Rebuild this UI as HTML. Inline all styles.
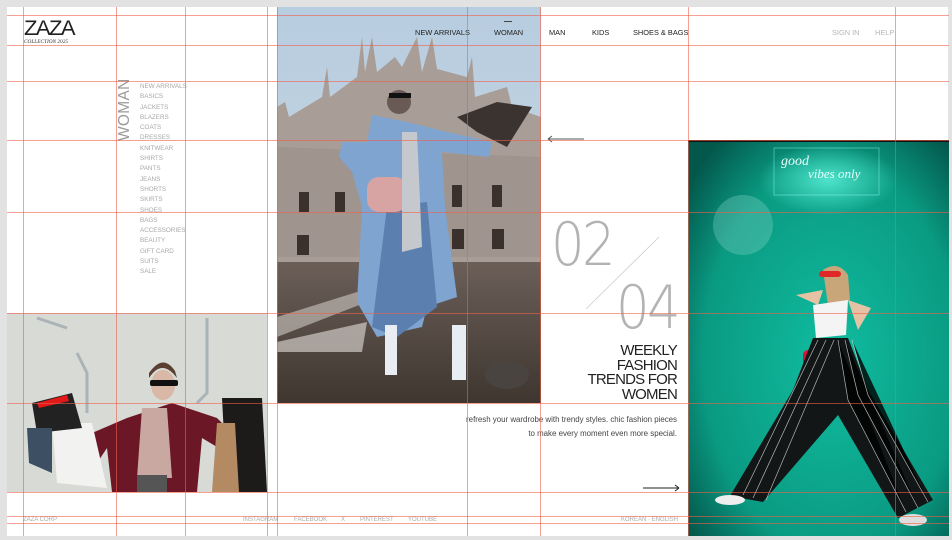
<!DOCTYPE html>
<html><head><meta charset="utf-8"><style>
*{margin:0;padding:0;box-sizing:border-box}
body{width:952px;height:540px;background:#e2e2e2;position:relative;overflow:hidden;font-family:"Liberation Sans",Arial,sans-serif}
.pg{position:absolute;left:7px;top:7px;width:941px;height:529px;background:#fff}
.a{position:absolute;white-space:nowrap}
.nav{font-size:7.4px;color:#222;top:28px}
.menu{left:140px;top:82px;font-size:6.3px;color:#a8a8a8;line-height:10.3px}
.ft{top:517px;font-size:6px;color:#aaa}
.vl{position:absolute;top:7px;width:1px;height:529px;background:rgba(240,95,75,.6)}
.hl{position:absolute;left:7px;height:1px;width:942px;background:rgba(240,95,75,.6)}
.num{font-family:"DejaVu Sans","Liberation Sans",sans-serif;font-weight:200;font-size:60px;color:#b3b3b3;letter-spacing:-3px;transform:scaleX(.88);transform-origin:left}
</style></head><body>
<div class="pg"></div>

<!-- center photo -->
<svg class="a" style="left:277px;top:7px" width="264" height="396" viewBox="0 0 264 396">
<defs><linearGradient id="sky" x1="0" y1="0" x2="0" y2="1"><stop offset="0" stop-color="#b7cde0"/><stop offset="1" stop-color="#cfd8df"/></linearGradient>
<linearGradient id="gr" x1="0" y1="0" x2="0" y2="1"><stop offset="0" stop-color="#6b5f58"/><stop offset="1" stop-color="#3f3630"/></linearGradient></defs>
<rect width="264" height="396" fill="url(#sky)"/>
<path d="M0 100 L8 95 L12 110 L45 90 L50 60 L53 90 L80 70 L85 30 L88 65 L95 30 L100 65 L118 50 L125 60 L140 30 L145 65 L155 30 L160 62 L190 70 L195 50 L198 90 L230 80 L235 100 L264 110 L264 258 L0 258Z" fill="#a89d97"/>
<path d="M0 140 L264 150 L264 250 L0 250Z" fill="#968b85" opacity=".5"/>
<g fill="#3a302c"><rect x="22" y="185" width="10" height="20"/><rect x="58" y="185" width="10" height="20"/><rect x="175" y="178" width="10" height="22"/><rect x="215" y="178" width="10" height="22"/><rect x="20" y="228" width="12" height="20"/><rect x="175" y="222" width="12" height="20"/><rect x="215" y="222" width="12" height="20"/></g>
<rect y="255" width="264" height="141" fill="url(#gr)"/>
<path d="M0 310 L80 285 L90 295 L0 330Z" fill="#bdb6b0" opacity=".7"/>
<path d="M0 335 L90 315 L85 345 L0 345Z" fill="#cfc9c4" opacity=".7"/>
<path d="M95 108 L130 115 L170 125 L215 135 L212 150 L165 145 L168 200 L180 290 L150 300 L145 320 L100 330 L80 295 L85 200 L75 165 L62 150 L65 135 L90 135Z" fill="#7fa4d0"/>
<path d="M110 200 L150 195 L160 300 L120 330 L95 320Z" fill="#5b7fae"/>
<rect x="90" y="170" width="40" height="35" rx="12" fill="#d8a3a3"/>
<path d="M125 125 L140 125 L145 240 L125 245Z" fill="#c5c8cc"/>
<circle cx="122" cy="95" r="12" fill="#6a5a55"/>
<rect x="112" y="86" width="22" height="5" fill="#111"/>
<rect x="108" y="318" width="12" height="50" fill="#e8edf3"/>
<rect x="175" y="318" width="14" height="55" fill="#e8edf3"/>
<path d="M180 110 L220 95 L255 100 L230 140 L200 125Z" fill="#3a3330"/>
<ellipse cx="230" cy="368" rx="22" ry="14" fill="#4a4440"/>
</svg>

<!-- bottom-left photo -->
<svg class="a" style="left:7px;top:313px" width="260" height="179" viewBox="0 0 260 179">
<rect width="260" height="179" fill="#d8dad6"/>
<path d="M30 5 L60 15 M200 5 L200 80 L190 90 M70 40 L80 60 L80 100 M235 110 L240 140" stroke="#8c9aa4" stroke-width="3" fill="none" opacity=".6"/>
<path d="M85 120 L120 105 L165 90 L180 95 L210 105 L225 120 L220 140 L195 125 L190 179 L105 179 L100 135 L90 150Z" fill="#6b1726"/>
<path d="M135 95 L160 95 L165 165 L130 165Z" fill="#c9a8a2"/>
<rect x="130" y="162" width="30" height="17" fill="#555"/>
<ellipse cx="156" cy="72" rx="12" ry="15" fill="#d9b8a8"/>
<path d="M142 65 Q155 45 170 65 L168 58 Q156 40 142 60Z" fill="#5a4030"/>
<rect x="143" y="67" width="28" height="6" rx="2" fill="#111"/>
<path d="M45 110 L85 110 L100 175 L50 170Z" fill="#f2f2f0"/>
<path d="M25 90 L65 80 L75 115 L30 120Z" fill="#222"/>
<path d="M30 90 L60 82 L62 88 L32 95Z" fill="#e31818"/>
<path d="M20 115 L45 115 L45 160 L22 150Z" fill="#3d4f62"/>
<path d="M215 85 L255 85 L260 179 L220 179Z" fill="#1d1a1a"/>
<path d="M210 110 L228 110 L232 179 L205 179Z" fill="#b48a63"/>
</svg>

<!-- right photo -->
<svg class="a" style="left:688px;top:140px" width="261" height="396" viewBox="0 0 261 396">
<defs><radialGradient id="tl" cx=".55" cy=".55" r=".7"><stop offset="0" stop-color="#10bda0"/><stop offset=".7" stop-color="#0a9a82"/><stop offset="1" stop-color="#03574b"/></radialGradient>
<radialGradient id="gl" cx=".5" cy=".5" r=".5"><stop offset="0" stop-color="#5ff5dc" stop-opacity=".8"/><stop offset="1" stop-color="#5ff5dc" stop-opacity="0"/></radialGradient></defs>
<rect width="261" height="396" fill="url(#tl)"/>
<rect x="0" y="0" width="261" height="2" fill="#111"/>
<ellipse cx="140" cy="40" rx="70" ry="35" fill="url(#gl)"/>
<ellipse cx="55" cy="85" rx="30" ry="30" fill="#7fd2c2" opacity=".35"/>
<rect x="86" y="8" width="105" height="47" fill="none" stroke="#9ff" stroke-width=".6" opacity=".7"/>
<text x="93" y="25" font-family="Liberation Serif,serif" font-style="italic" font-size="14" fill="#e8fffb">good</text>
<text x="120" y="38" font-family="Liberation Serif,serif" font-style="italic" font-size="13" fill="#e8fffb">vibes only</text>
<path d="M135 130 Q150 120 160 135 L162 160 L140 165 Z" fill="#c9a57a"/>
<rect x="131" y="131" width="22" height="6" rx="3" fill="#e02828"/>
<path d="M108 155 L135 150 L130 165 Z M160 160 L183 168 L170 190 Z" fill="#e6c2a4"/>
<path d="M125 165 L160 160 L158 195 L128 198Z" fill="#f4f4f4"/>
<rect x="115" y="210" width="20" height="25" rx="5" fill="#d8123d"/>
<path d="M125 198 L160 198 L180 250 L245 360 L210 378 L150 275 L75 362 L42 356 L105 250Z" fill="#121616"/>
<g stroke="#ddd" stroke-width=".7" opacity=".8"><path d="M130 200 L55 355 M138 200 L65 358 M146 200 L78 360 M150 200 L160 260 L218 372 M157 200 L170 255 L230 368 M164 200 L180 255 L240 362"/></g>
<ellipse cx="42" cy="360" rx="15" ry="5" fill="#eee"/>
<ellipse cx="225" cy="380" rx="14" ry="6" fill="#ddd"/>
</svg>

<!-- logo -->
<div class="a" style="left:24px;top:17px;font-size:21px;letter-spacing:-1.5px;color:#222;transform:scaleX(1.05);transform-origin:left">ZAZA</div>
<div class="a" style="left:24px;top:39px;font-family:'Liberation Serif',serif;font-style:italic;font-size:5.3px;color:#333">COLLECTION 2025</div>

<!-- nav -->
<div class="a nav" style="left:415px">NEW ARRIVALS</div>
<div class="a" style="left:504px;top:21px;width:8px;height:1px;background:#444"></div>
<div class="a nav" style="left:494px">WOMAN</div>
<div class="a nav" style="left:549px">MAN</div>
<div class="a nav" style="left:592px">KIDS</div>
<div class="a nav" style="left:633px">SHOES &amp; BAGS</div>
<div class="a nav" style="left:832px;color:#b5b5b5">SIGN IN</div>
<div class="a nav" style="left:875px;color:#b5b5b5">HELP</div>

<!-- side menu -->
<div class="a" style="left:116px;top:141px;font-size:15.5px;color:#9a9a9a;transform:rotate(-90deg);transform-origin:left top;letter-spacing:.3px">WOMAN</div>
<div class="a menu">NEW ARRIVALS<br>BASICS<br>JACKETS<br>BLAZERS<br>COATS<br>DRESSES<br>KNITWEAR<br>SHIRTS<br>PANTS<br>JEANS<br>SHORTS<br>SKIRTS<br>SHOES<br>BAGS<br>ACCESSORIES<br>BEAUTY<br>GIFT CARD<br>SUITS<br>SALE</div>

<!-- arrows -->
<svg class="a" style="left:547px;top:135px" width="38" height="8"><path d="M1 4 H37 M1 4 L5 1 M1 4 L5 7" stroke="#555" stroke-width="1" fill="none"/></svg>
<svg class="a" style="left:642px;top:484px" width="38" height="8"><path d="M1 4 H37 M37 4 L33 1 M37 4 L33 7" stroke="#222" stroke-width="1" fill="none"/></svg>

<!-- counter -->
<div class="a num" style="left:551px;top:210px">02</div>
<div class="a num" style="left:616px;top:273px">04</div>
<svg class="a" style="left:585px;top:235px" width="76" height="76"><line x1="1" y1="74" x2="74" y2="2" stroke="#ccc" stroke-width=".8"/></svg>

<div class="a" style="right:275px;top:344px;font-size:15px;line-height:14.7px;color:#222;text-align:right;letter-spacing:-.8px">WEEKLY<br>FASHION<br>TRENDS FOR<br>WOMEN</div>
<div class="a" style="right:275px;top:413px;font-size:7.9px;line-height:13.5px;color:#444;text-align:right">refresh your wardrobe with trendy styles. chic fashion pieces<br>to make every moment even more special.</div>

<!-- footer -->
<div class="a ft" style="left:23px">ZAZA CORP</div>
<div class="a ft" style="left:243px">INSTAGRAM</div>
<div class="a ft" style="left:294px">FACEBOOK</div>
<div class="a ft" style="left:341px">X</div>
<div class="a ft" style="left:360px">PINTEREST</div>
<div class="a ft" style="left:408px">YOUTUBE</div>
<div class="a ft" style="left:621px">KOREAN · ENGLISH</div>

<!-- grid overlay -->
<div class="vl" style="left:23px"></div><div class="vl" style="left:116px"></div><div class="vl" style="left:185px"></div><div class="vl" style="left:267px"></div><div class="vl" style="left:277px"></div><div class="vl" style="left:467px"></div><div class="vl" style="left:540px"></div><div class="vl" style="left:688px"></div><div class="vl" style="left:895px"></div>
<div class="hl" style="top:15px"></div><div class="hl" style="top:45px"></div><div class="hl" style="top:81px"></div><div class="hl" style="top:140px"></div><div class="hl" style="top:212px"></div><div class="hl" style="top:313px"></div><div class="hl" style="top:403px"></div><div class="hl" style="top:492px"></div><div class="hl" style="top:516px"></div><div class="hl" style="top:523px"></div>
</body></html>
